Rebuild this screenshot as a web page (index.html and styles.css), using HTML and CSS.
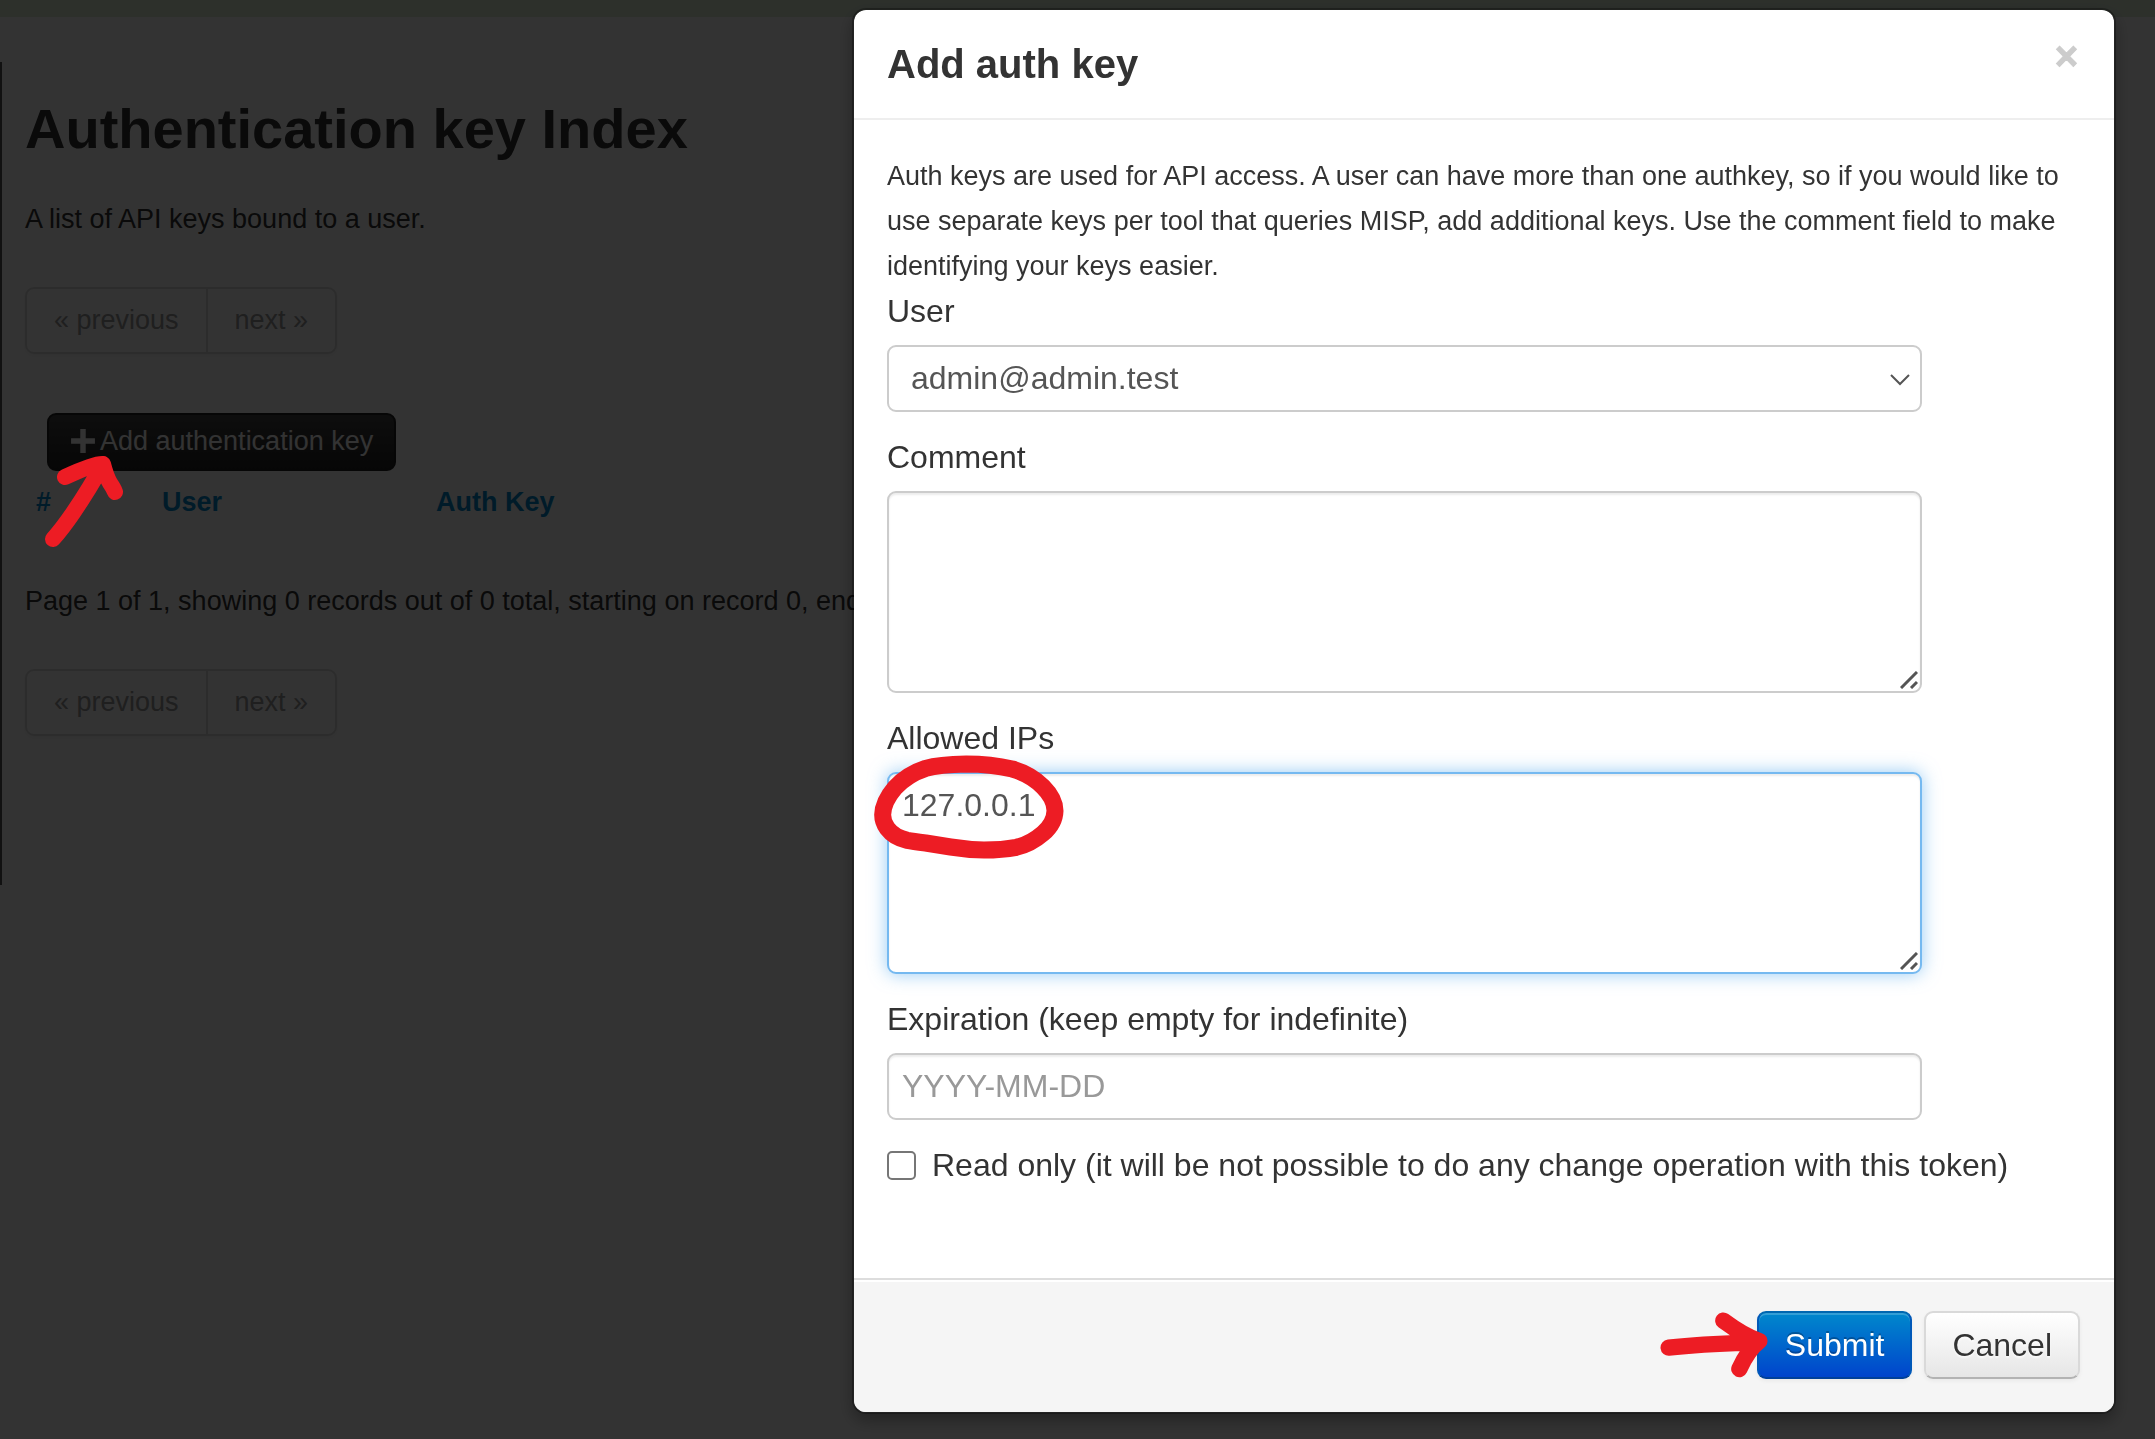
FILE: index.html
```
<!DOCTYPE html>
<html lang="en">
<head>
<meta charset="utf-8">
<title>Authentication key Index</title>
<link rel="stylesheet" href="styles.css">
</head>
<body>
<div class="flash"></div>
<main class="index">
  <h2 class="index-title">Authentication key Index</h2>
  <p class="index-text">A list of API keys bound to a user.</p>
  <nav class="pagination" aria-label="Pages, top">
    <span class="page-link">« previous</span>
    <span class="page-link">next »</span>
  </nav>
  <div class="toolbar">
    <button class="btn-inverse" type="button">
      <svg class="plus" viewBox="0 0 24 24" aria-hidden="true"><path d="M12 1v22M1 12h22"/></svg>Add authentication key
    </button>
    <svg class="mark mark-add" viewBox="0 0 90 100" aria-hidden="true"><path d="M13 89Q22 79 33 63Q50 38 63 14Q55 13 25 27M63 14Q66 26 70 33Q74 39 75 42"/></svg>
  </div>
  <table class="keys">
    <thead>
      <tr><th class="col-id"><a href="#id">#</a></th><th class="col-user"><a href="#user">User</a></th><th><a href="#key">Auth Key</a></th></tr>
    </thead>
  </table>
  <p class="index-text">Page 1 of 1, showing 0 records out of 0 total, starting on record 0, ending on 0</p>
  <nav class="pagination" aria-label="Pages, bottom">
    <span class="page-link">« previous</span>
    <span class="page-link">next »</span>
  </nav>
</main>

<div class="backdrop">
  <form class="modal" role="dialog" aria-labelledby="modal-title">
    <header class="modal-header">
      <h3 class="modal-title" id="modal-title">Add auth key</h3>
      <button class="close" type="button" aria-label="Close">×</button>
    </header>
    <div class="modal-body">
      <p class="intro">Auth keys are used for API access. A user can have more than one authkey, so if you would like to use separate keys per tool that queries MISP, add additional keys. Use the comment field to make identifying your keys easier.</p>
      <label class="label" for="user">User</label>
      <div class="field">
        <select class="control select" id="user"><option>admin@admin.test</option></select>
        <svg class="chevron" viewBox="0 0 20 12" aria-hidden="true"><path d="M1 1l9 9 9-9"/></svg>
      </div>
      <label class="label" for="comment">Comment</label>
      <div class="field">
        <textarea class="control area" id="comment"></textarea>
        <svg class="grip" viewBox="0 0 18 18" aria-hidden="true"><path d="M1 17L17 1M11 17l6-6"/></svg>
      </div>
      <label class="label" for="ips">Allowed IPs</label>
      <div class="field">
        <textarea class="control area active" id="ips">127.0.0.1</textarea>
        <svg class="grip" viewBox="0 0 18 18" aria-hidden="true"><path d="M1 17L17 1M11 17l6-6"/></svg>
        <svg class="mark mark-ip" viewBox="90 90 600 342" aria-hidden="true"><path d="M382 132Q455 132 520 147Q575 163 612 200Q648 236 648 272Q647 310 612 340Q575 372 532 382Q490 390 435 390Q385 389 335 381L260 369Q220 364 205 361Q165 352 145 325Q131 306 131 284Q132 245 168 203Q205 163 260 145Q300 134 382 132Z"/></svg>
      </div>
      <label class="label" for="expiration">Expiration (keep empty for indefinite)</label>
      <div class="field">
        <input class="control" id="expiration" type="text" placeholder="YYYY-MM-DD">
      </div>
      <div class="check">
        <input class="checkbox" id="readonly" type="checkbox">
        <label for="readonly">Read only (it will be not possible to do any change operation with this token)</label>
      </div>
    </div>
    <footer class="modal-footer">
      <div class="submit-wrap">
        <button class="btn btn-primary" type="button">Submit</button>
        <svg class="mark mark-submit" viewBox="48 150 348 210" aria-hidden="true"><path d="M86 263Q180 253 320 248L358 243Q315 230 250 182M358 243Q325 268 298 327"/></svg>
      </div>
      <button class="btn" type="button">Cancel</button>
    </footer>
  </form>
</div>
</body>
</html>
```
FILE: styles.css
```
* {
  box-sizing: border-box;
}

body {
  margin: 0;
  background: #fff;
  color: #333;
  font: 27px/45px "Liberation Sans", Arial, sans-serif;
}

button,
input,
select,
textarea {
  font-family: inherit;
}

.flash {
  height: 17px;
  background: #dff0d8;
}

/* Index page behind the dialog */
.index {
  margin-top: 45px;
  padding: 22px 0 149px 23px;
  border-left: 2px solid #555;
}

.index-title {
  margin: 0 0 23px;
  font-size: 56px;
  line-height: 90px;
}

.index-text {
  margin: 0 0 45px;
  white-space: nowrap;
}

.pagination {
  display: flex;
  width: max-content;
  border: 2px solid #ddd;
  border-radius: 9px;
  box-shadow: 0 2px 4px rgba(0, 0, 0, .05);
  color: #999;
}

.page-link {
  padding: 9px 27px;
}

.page-link + .page-link {
  border-left: 2px solid #ddd;
}

.toolbar {
  position: relative;
  margin: 59px 22px 0;
}

.btn-inverse {
  display: flex;
  align-items: center;
  height: 58px;
  padding: 0 21px 2px;
  border: 2px solid #222;
  border-radius: 9px;
  background: linear-gradient(#444, #222);
  color: #fff;
  font-size: 27px;
  line-height: 45px;
}

.plus {
  width: 26px;
  height: 26px;
  margin-right: 4px;
  fill: none;
  stroke: #fff;
  stroke-width: 5;
}

.keys {
  width: 100%;
  margin-bottom: 45px;
  border-collapse: collapse;
  table-layout: fixed;
}

.keys th {
  padding: 9px 11px;
  text-align: left;
}

.keys a {
  color: #08c;
  text-decoration: none;
}

.col-id {
  width: 126px;
}

.col-user {
  width: 274px;
}

/* Dialog */
.backdrop {
  position: fixed;
  inset: 0;
  z-index: 10;
  display: flex;
  justify-content: flex-end;
  align-items: flex-start;
  padding: 8px 39px;
  background: rgba(0, 0, 0, .8);
}

.modal {
  width: 100%;
  max-width: 1264px;
  border: 2px solid rgba(0, 0, 0, .3);
  border-radius: 14px;
  background: #fff;
  background-clip: padding-box;
  box-shadow: 0 7px 16px rgba(0, 0, 0, .3);
}

.modal-header {
  display: flex;
  justify-content: space-between;
  align-items: flex-start;
  padding: 20px 36px 20px 33px;
  border-bottom: 2px solid #eee;
}

.modal-title {
  margin: 0;
  font-size: 40px;
  line-height: 68px;
}

.close {
  margin-top: 4px;
  padding: 0;
  border: 0;
  background: none;
  color: #ccc;
  font-size: 40px;
  font-weight: bold;
  line-height: 45px;
  -webkit-text-stroke: 1px #ccc;
}

.modal-body {
  padding: 34px 34px 90px 33px;
}

.intro {
  margin: 0;
}

.label {
  display: block;
  width: max-content;
  margin-bottom: 11px;
  font-size: 32px;
}

.field {
  position: relative;
  max-width: 1035px;
  margin-bottom: 23px;
}

.control {
  display: block;
  width: 100%;
  height: 67px;
  padding: 9px 13px;
  border: 2px solid #ccc;
  border-radius: 9px;
  outline: 0;
  background: #fff;
  box-shadow: inset 0 2px 2px rgba(0, 0, 0, .075);
  color: #555;
  font-size: 32px;
  line-height: 45px;
}

.control::placeholder {
  color: #999;
  opacity: 1;
}

.select {
  padding: 0 22px;
  appearance: none;
  box-shadow: none;
}

.area {
  height: 202px;
  resize: none;
}

.active {
  border-color: #75b9f0;
  box-shadow: inset 0 2px 2px rgba(0, 0, 0, .075), 0 0 18px rgba(82, 168, 236, .6);
}

.chevron,
.grip {
  position: absolute;
  fill: none;
  stroke: #555;
  stroke-width: 2;
  pointer-events: none;
}

.chevron {
  top: 29px;
  right: 12px;
  width: 20px;
  height: 12px;
}

.grip {
  right: 4px;
  bottom: 4px;
  width: 18px;
  height: 18px;
  stroke-width: 3;
}

.check {
  display: flex;
  align-items: center;
  gap: 16px;
  font-size: 32px;
}

.checkbox {
  flex: none;
  width: 29px;
  height: 29px;
  margin: 0;
  border: 2px solid #767676;
  border-radius: 5px;
  appearance: none;
  background: #fff;
}

.modal-footer {
  display: flex;
  justify-content: flex-end;
  gap: 12px;
  padding: 31px 34px 33px;
  border-top: 2px solid #ddd;
  border-radius: 0 0 12px 12px;
  background: #f5f5f5;
  box-shadow: inset 0 2px 0 #fff;
}

.btn {
  height: 68px;
  padding: 0 26px;
  border: 2px solid #d9d9d9;
  border-bottom-color: #b3b3b3;
  border-radius: 9px;
  background: linear-gradient(#fff, #e6e6e6);
  background-clip: padding-box;
  box-shadow: 0 2px 4px rgba(0, 0, 0, .05);
  color: #333;
  font-size: 32px;
  line-height: 45px;
  text-shadow: 0 2px 2px rgba(255, 255, 255, .75);
}

.btn-primary {
  border-color: #0067b0 #0058b8 #004099;
  background: linear-gradient(#08c, #04c);
  box-shadow: inset 0 2px 0 rgba(255, 255, 255, .2), 0 2px 4px rgba(0, 0, 0, .05);
  color: #fff;
  text-shadow: 0 -2px 0 rgba(0, 0, 0, .25);
}

.submit-wrap {
  position: relative;
}

/* Hand-drawn red marks */
.mark {
  position: absolute;
  z-index: 20;
  fill: none;
  stroke: #ed1c24;
  stroke-linecap: round;
  stroke-linejoin: round;
  pointer-events: none;
}

.mark-add {
  top: 37px;
  left: -7px;
  width: 90px;
  height: 100px;
  stroke-width: 16;
}

.mark-ip {
  top: -22px;
  left: -18px;
  width: 200px;
  height: 114px;
  stroke-width: 51;
}

.mark-submit {
  top: -1px;
  left: -101px;
  width: 116px;
  height: 70px;
  stroke-width: 49;
}
```
